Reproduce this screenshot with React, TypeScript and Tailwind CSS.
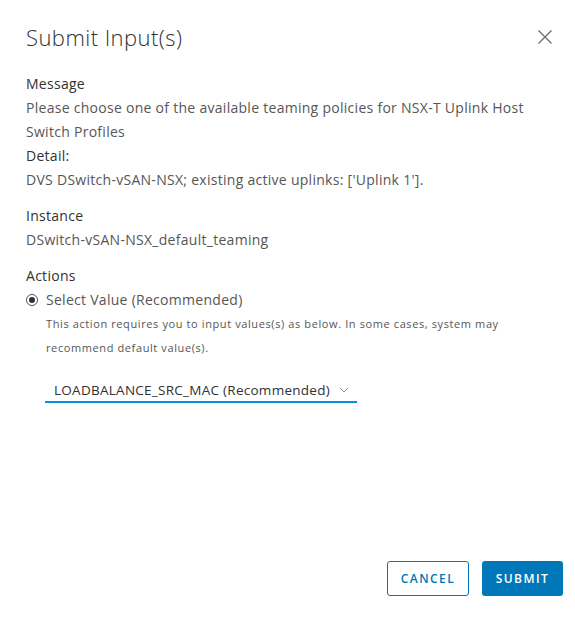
import React from "react";

export default function App() {
  const font = { fontFamily: '"Open Sans", "Liberation Sans", sans-serif' };
  return (
    <div className="w-[575px] h-[620px] bg-white flex flex-col" style={font}>
      <div className="flex items-center justify-between pl-[26px] pr-[22px] pt-[22px]">
        <div className="text-[22px] leading-[30px] font-light tracking-[0.02em] text-[#313131]">Submit Input(s)</div>
        <svg width="16" height="16" viewBox="0 0 16 16" className="text-[#6a6a6a]">
          <path d="M1.5 1.5 L14.5 14.5 M14.5 1.5 L1.5 14.5" stroke="currentColor" strokeWidth="1.3" fill="none" />
        </svg>
      </div>
      <div className="px-[26px] pt-[20px] text-[14px] leading-[24px] tracking-[0.02em] text-[#565656]">
        <div className="font-medium text-[#313131]">Message</div>
        <div>Please choose one of the available teaming policies for NSX-T Uplink Host Switch Profiles</div>
        <div className="font-medium text-[#313131]">Detail:</div>
        <div>DVS DSwitch-vSAN-NSX; existing active uplinks: ['Uplink 1'].</div>
        <div className="font-medium text-[#313131] mt-[12px]">Instance</div>
        <div>DSwitch-vSAN-NSX_default_teaming</div>
        <div className="font-medium text-[#313131] mt-[12px]">Actions</div>
        <div className="flex items-center">
          <span className="w-[12px] h-[12px] rounded-full border border-[#565656] flex items-center justify-center mr-[8px]">
            <span className="w-[6px] h-[6px] rounded-full bg-[#313131]" />
          </span>
          <span>Select Value (Recommended)</span>
        </div>
        <div className="pl-[20px] text-[11px] leading-[24px] tracking-[0.055em]">
          This action requires you to input values(s) as below. In some cases, system may recommend default value(s).
        </div>
        <div className="pl-[19px] mt-[18px]">
          <div className="w-[312px] h-[25px] border-b-2 border-[#0094d2] flex items-center justify-between pl-[9px] pr-[8px] text-[#313131] text-[13.5px] tracking-[0.02em]">
            <span>LOADBALANCE_SRC_MAC (Recommended)</span>
            <svg width="10" height="6" viewBox="0 0 10 6">
              <path d="M1 1 L5 5 L9 1" stroke="#9a9a9a" strokeWidth="1" fill="none" />
            </svg>
          </div>
        </div>
      </div>
      <div className="flex-1" />
      <div className="flex justify-end gap-[13px] pr-[12px] pb-[24px]">
        <button className="w-[82px] h-[35px] border border-[#0077b8] rounded-[3px] text-[#0077b8] text-[12px] font-semibold tracking-[0.12em]">
          CANCEL
        </button>
        <button className="w-[81px] h-[35px] bg-[#0077b8] rounded-[3px] text-white text-[12px] font-semibold tracking-[0.12em]">
          SUBMIT
        </button>
      </div>
    </div>
  );
}
